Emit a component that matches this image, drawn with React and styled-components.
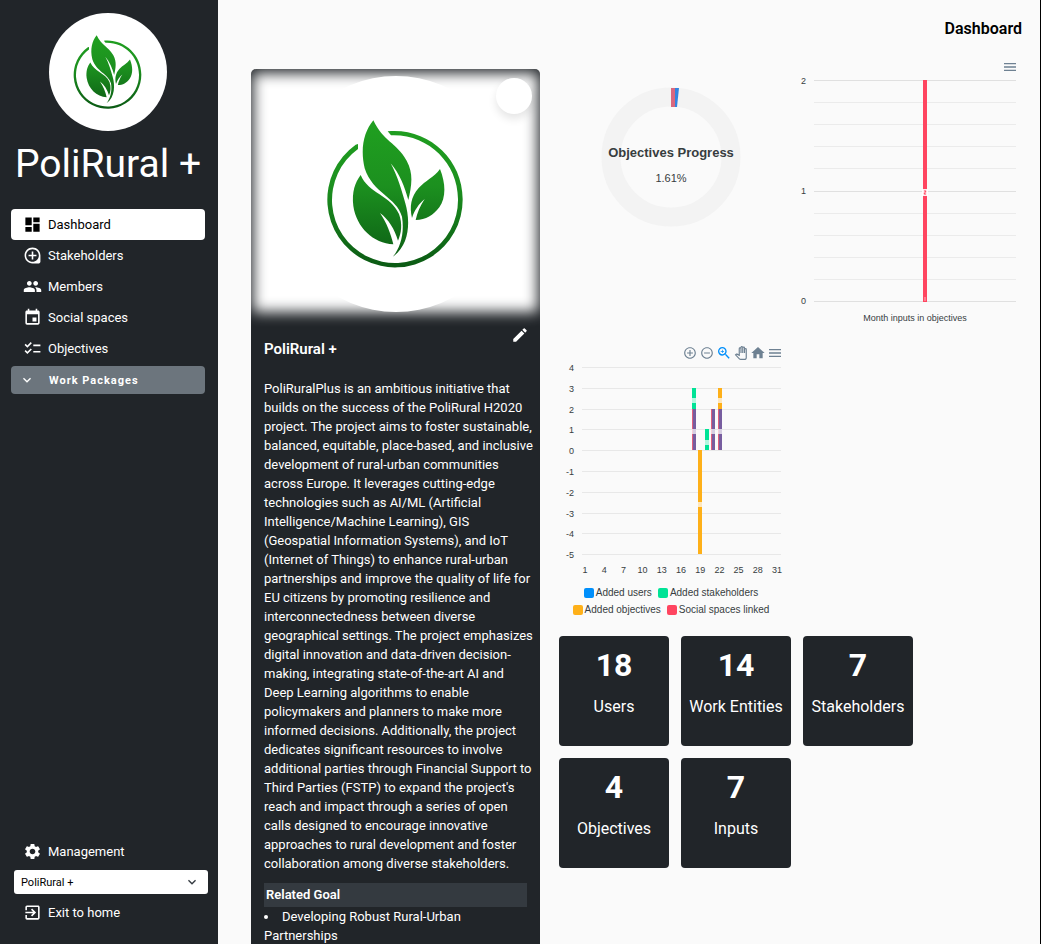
import React from "react";
import styled, { createGlobalStyle } from "styled-components";
import {
  MdDashboard, MdLoupe, MdPeople, MdEvent, MdChecklist, MdSettings, MdExitToApp, MdEdit,
  MdExpandMore, MdMenu, MdHome, MdZoomIn, MdAddCircleOutline, MdRemoveCircleOutline, MdOutlinePanTool,
} from "react-icons/md";

const ink = "#212529";
const chartFont = '"Liberation Sans", Arial, sans-serif';

const GlobalStyle = createGlobalStyle`
  *, *::before, *::after { box-sizing: border-box; }
  body { margin: 0; background: #fafafa; font-family: Roboto, sans-serif; color: #000; }
  h1, h2, h3, p, ul { margin: 0; padding: 0; }
  button { font-family: inherit; border: 0; padding: 0; background: none; cursor: pointer; }
`;

const Shell = styled.div`
  display: flex;
  height: 100vh;
  overflow: hidden;
`;

const Sidebar = styled.aside`
  display: flex;
  flex-direction: column;
  flex: 0 0 218px;
  padding: 13px 13px 16px 11px;
  background: ${ink};
  color: #fff;
`;

const Brand = styled.div`
  display: flex;
  flex-direction: column;
  align-items: center;
  margin-bottom: 21px;
`;

const BrandName = styled.h1`
  margin-top: 9px;
  font-size: 39px;
  line-height: 48px;
  font-weight: 400;
  white-space: nowrap;
`;

const Badge = styled.div`
  width: ${(p) => p.$size}px;
  height: ${(p) => p.$size}px;
  border-radius: 50%;
  background: #fff;
  svg { display: block; width: 100%; height: 100%; }
`;

const Nav = styled.nav`
  display: flex;
  flex-direction: column;
`;

const NavItem = styled.a`
  display: flex;
  align-items: center;
  gap: 6px;
  height: 31px;
  padding-left: 12px;
  border-radius: 4px;
  font-size: 13px;
  line-height: 20px;
  text-decoration: none;
  color: ${(p) => (p.$active ? "#000" : "#fff")};
  background: ${(p) => (p.$active ? "#fff" : "transparent")};
  svg { width: 19px; height: 19px; }
`;

const PackagesToggle = styled.button`
  display: flex;
  align-items: center;
  gap: 14px;
  height: 28px;
  margin-top: 2px;
  padding-left: 8px;
  border-radius: 4px;
  background: #6c757d;
  color: #fff;
  font-size: 11px;
  font-weight: 700;
  letter-spacing: 1px;
  svg { width: 16px; height: 16px; }
`;

const SidebarFooter = styled.div`
  display: flex;
  flex-direction: column;
  gap: 3px;
  margin-top: auto;
`;

const SelectWrap = styled.div`
  position: relative;
  margin: 0 -3px 0 3px;
  svg {
    position: absolute;
    right: 8px;
    top: 4px;
    width: 16px;
    height: 16px;
    color: #343a40;
    pointer-events: none;
  }
`;

const ProjectSelect = styled.select`
  display: block;
  width: 100%;
  height: 24px;
  padding: 0 24px 0 7px;
  appearance: none;
  border: 0;
  border-radius: 3px;
  background: #fff;
  color: #000;
  font-family: inherit;
  font-size: 11px;
`;

const Main = styled.main`
  flex: 1;
  min-width: 0;
  padding: 19px 18px 0 33px;
  overflow-y: auto;
  scrollbar-width: none;
  border-right: 1px solid #000;
`;

const PageTitle = styled.h2`
  text-align: right;
  font-size: 16px;
  line-height: 20px;
  font-weight: 600;
`;

const Content = styled.div`
  display: flex;
  align-items: flex-start;
  gap: 19px;
  margin-top: 30px;
`;

const ProjectCard = styled.article`
  position: relative;
  flex: 0 0 289px;
  padding-bottom: 40px;
  overflow: hidden;
  border-radius: 5px;
  background: ${ink};
  color: #fff;
`;

const Cover = styled.div`
  position: relative;
  display: flex;
  justify-content: center;
  height: 255px;
  padding-top: 7px;
  &::before {
    content: "";
    position: absolute;
    inset: 4px 2px 12px;
    background: #fff;
    filter: blur(7px);
  }
  ${Badge} { position: relative; }
`;

const CoverAction = styled.button`
  position: absolute;
  top: 9px;
  right: 8px;
  width: 36px;
  height: 36px;
  border-radius: 50%;
  background: #fff;
  box-shadow: 0 5px 8px rgba(0, 0, 0, 0.1);
`;

const CardBody = styled.div`
  padding: 0 13px;
  font-size: 13px;
  line-height: 19px;
`;

const CardHeading = styled.div`
  display: flex;
  justify-content: space-between;
  margin-bottom: 20px;
  h3 { padding-top: 15px; font-size: 15px; line-height: 20px; font-weight: 600; }
`;

const EditButton = styled.button`
  display: flex;
  align-items: flex-start;
  justify-content: flex-end;
  width: 24px;
  height: 24px;
  margin-right: -2px;
  padding-top: 2px;
  color: #fff;
  svg { width: 18px; height: 18px; }
`;

const Description = styled.p`
  margin-right: -6px;
`;

const GoalTitle = styled.h3`
  margin-top: 10px;
  padding: 2px;
  background: #343a40;
  font-size: 13px;
  line-height: 20px;
  font-weight: 600;
`;

const GoalList = styled.ul`
  list-style: disc inside;
`;

const Panel = styled.section`
  display: flex;
  flex-direction: column;
  flex: 1;
  min-width: 0;
`;

const ChartRow = styled.div`
  display: flex;
  justify-content: space-between;
  margin-top: -12px;
  height: 286px;
`;

const Figure = styled.figure`
  position: relative;
  width: ${(p) => p.$width}px;
  margin: 0;
  svg text { font-family: ${chartFont}; fill: #373d3f; }
`;

const Toolbar = styled.div`
  display: flex;
  align-items: center;
  justify-content: flex-end;
  gap: 1px;
  height: 20px;
  padding-right: ${(p) => p.$inset || 0}px;
`;

const Tool = styled.button`
  display: flex;
  align-items: center;
  justify-content: center;
  width: 16px;
  height: 16px;
  color: ${(p) => (p.$on ? "#008ffb" : "#6e8192")};
  svg { width: ${(p) => p.$size || 16}px; height: ${(p) => p.$size || 16}px; }
`;

const Plot = styled.svg`
  display: block;
`;

const Legend = styled.ul`
  display: flex;
  flex-wrap: wrap;
  justify-content: center;
  gap: 4px 6px;
  padding: 0 16px 0 8px;
  list-style: none;
  font-family: ${chartFont};
  font-size: 10px;
  line-height: 13px;
  color: #373d3f;
`;

const LegendItem = styled.li`
  display: flex;
  align-items: center;
  gap: 2px;
  &::before {
    content: "";
    width: 10px;
    height: 10px;
    border-radius: 2px;
    background: ${(p) => p.$color};
  }
`;

const Stats = styled.div`
  display: flex;
  flex-wrap: wrap;
  gap: 12px;
  margin-top: 20px;
`;

const Stat = styled.div`
  width: 110px;
  height: 110px;
  padding-top: 9px;
  border-radius: 4px;
  background: ${ink};
  color: #fff;
  text-align: center;
  white-space: nowrap;
`;

const StatValue = styled.div`
  font-size: 32px;
  line-height: 40px;
  font-weight: 700;
`;

const StatLabel = styled.div`
  margin-top: 12px;
  font-size: 16px;
  line-height: 20px;
`;

function LeafLogo({ id }) {
  return (
    <svg viewBox="114 48 708 708" role="img" aria-label="PoliRural logo">
      <defs>
        <linearGradient id={id} gradientUnits="userSpaceOnUse" x1="0" y1="180" x2="0" y2="620">
          <stop offset="0" stopColor="#20a020" />
          <stop offset="0.45" stopColor="#1c901f" />
          <stop offset="1" stopColor="#0b5a14" />
        </linearGradient>
      </defs>
      <g fill={`url(#${id})`}>
        <path d="M443 214C560 202 668 294 668 417A203 203 0 1 1 347 254L354 252L354 267A189 189 0 1 0 654 417C654 308 562 221 453 226Z" />
        <path d="M400 181C430 245 468 246 500 302C522 342 514 380 505 420C494 380 478 340 452 310C472 346 486 394 496 430C510 478 512 552 459 590C481 562 494 520 486 470C470 412 398 400 374 325C360 265 372 215 400 181Z" />
        <path d="M362 345C385 400 452 406 477 462C488 492 484 520 474 542C464 508 446 478 420 459C440 488 452 520 460 553C400 550 349 502 340 438C335 396 345 368 362 345Z" />
        <path d="M600 327C617 370 619 412 598 442C580 466 558 480 527 480C532 458 540 438 554 417C536 432 524 450 516 474C508 440 513 410 536 384C556 362 582 352 600 327Z" />
      </g>
    </svg>
  );
}

const navItems = [
  { label: "Dashboard", icon: MdDashboard, active: true },
  { label: "Stakeholders", icon: MdLoupe },
  { label: "Members", icon: MdPeople },
  { label: "Social spaces", icon: MdEvent },
  { label: "Objectives", icon: MdChecklist },
];

const stats = [
  [18, "Users"], [14, "Work Entities"], [7, "Stakeholders"], [4, "Objectives"], [7, "Inputs"],
];

const description =
  "PoliRuralPlus is an ambitious initiative that builds on the success of the PoliRural H2020 project. The project aims to foster sustainable, balanced, equitable, place-based, and inclusive development of rural-urban communities across Europe. It leverages cutting-edge technologies such as AI/ML (Artificial Intelligence/Machine Learning), GIS (Geospatial Information Systems), and IoT (Internet of Things) to enhance rural-urban partnerships and improve the quality of life for EU citizens by promoting resilience and interconnectedness between diverse geographical settings. The project emphasizes digital innovation and data-driven decision-making, integrating state-of-the-art AI and Deep Learning algorithms to enable policymakers and planners to make more informed decisions. Additionally, the project dedicates significant resources to involve additional parties through Financial Support to Third Parties (FSTP) to expand the project's reach and impact through a series of open calls designed to encourage innovative approaches to rural development and foster collaboration among diverse stakeholders.";

function ProgressChart() {
  return (
    <Figure $width={226}>
      <Plot width="226" height="240" viewBox="0 0 226 240">
        <circle cx="112" cy="100" r="60" fill="none" stroke="#f3f3f3" strokeWidth="19" />
        <path d="M112 31H120L118 50H112Z" fill="#3385e0" />
        <path d="M112 31H116V50H112Z" fill="#d9687f" />
        <text x="112" y="100" textAnchor="middle" fontSize="13" fontWeight="700">Objectives Progress</text>
        <text x="112" y="125" textAnchor="middle" fontSize="11">1.61%</text>
      </Plot>
    </Figure>
  );
}

function MonthChart() {
  const lines = Array.from({ length: 11 }, (_, i) => 14 + Math.round(i * 22.1));
  return (
    <Figure $width={228}>
      <Toolbar $inset={4}>
        <Tool aria-label="Menu"><MdMenu /></Tool>
      </Toolbar>
      <Plot width="228" height="250" viewBox="0 11 228 250">
        {lines.map((y, i) => (
          <path key={y} d={`M20 ${y + 0.5}H222`} stroke={i % 5 ? "#ebebeb" : "#e0e0e0"} />
        ))}
        <rect x="129" y="14" width="4" height="222" fill="#ff4560" />
        {[2, 1, 0].map((v, i) => (
          <text key={v} x="12" y={18 + i * 110} textAnchor="end" fontSize="9">{v}</text>
        ))}
        <rect x="128" y="123" width="6" height="7" fill="#fff" fillOpacity="0.9" />
        <path d="M130 125H132L130 128H132" fill="none" stroke="#ff4560" />
        <path d="M131 231V235" stroke="#fff" strokeOpacity="0.6" />
        <text x="121" y="255" textAnchor="middle" fontSize="9">Month inputs in objectives</text>
      </Plot>
    </Figure>
  );
}

function DailyChart() {
  const yOf = (v) => Math.round(7 + (4 - v) * 20.8);
  const ticks = [4, 3, 2, 1, 0, -1, -2, -3, -4, -5];
  const bars = [
    { x: 133, from: 2, to: 3, fill: "#00e396" },
    { x: 133, from: 0, to: 2, fill: "#775d9f", edge: true },
    { x: 146, from: 0, to: 1, fill: "#00e396" },
    { x: 152, from: 0, to: 2, fill: "#775d9f", edge: true },
    { x: 159, from: 2, to: 3, fill: "#feb019" },
    { x: 159, from: 0, to: 2, fill: "#775d9f", edge: true },
    { x: 139, from: -5, to: 0, fill: "#feb019" },
  ];
  const labels = [[135, 2.4], [135, 0.9], [148, 0.4], [154, 0.9], [161, 2.4], [161, 0.9], [141, -2.6]];
  return (
    <Figure $width={232}>
      <Toolbar $inset={8}>
        <Tool aria-label="Zoom in" $size={14}><MdAddCircleOutline /></Tool>
        <Tool aria-label="Zoom out" $size={14}><MdRemoveCircleOutline /></Tool>
        <Tool aria-label="Selection zoom" $on><MdZoomIn stroke="currentColor" /></Tool>
        <Tool aria-label="Pan" $size={14}><MdOutlinePanTool /></Tool>
        <Tool aria-label="Reset"><MdHome /></Tool>
        <Tool aria-label="Menu"><MdMenu /></Tool>
      </Toolbar>
      <Plot width="232" height="223" viewBox="0 3 232 223">
        {ticks.map((v) => (
          <g key={v}>
            <path d={`M23 ${yOf(v) + 0.5}H222`} stroke="#e8e8e8" />
            <text x="15" y={yOf(v) + 4} textAnchor="end" fontSize="9">{v}</text>
          </g>
        ))}
        {bars.map((b) => (
          <g key={`${b.x}${b.from}`}>
            <rect x={b.x} y={yOf(b.to)} width="4" height={yOf(b.from) - yOf(b.to)} fill={b.fill} />
            {b.edge && <rect x={b.x} y={yOf(b.to)} width="1" height={yOf(b.from) - yOf(b.to)} fill="#e0607c" />}
          </g>
        ))}
        {labels.map(([x, v]) => (
          <rect key={`${x}${v}`} x={x - 2} y={yOf(v) - 2} width="4" height="5" fill="#fff" fillOpacity="0.7" />
        ))}
        {[1, 4, 7, 10, 13, 16, 19, 22, 25, 28, 31].map((d, i) => (
          <text key={d} x={26 + i * 19.2} y="213" textAnchor="middle" fontSize="9">{d}</text>
        ))}
      </Plot>
      <Legend>
        <LegendItem $color="#008ffb">Added users</LegendItem>
        <LegendItem $color="#00e396">Added stakeholders</LegendItem>
        <LegendItem $color="#feb019">Added objectives</LegendItem>
        <LegendItem $color="#ff4560">Social spaces linked</LegendItem>
      </Legend>
    </Figure>
  );
}

export default function App() {
  return (
    <Shell>
      <GlobalStyle />
      <Sidebar>
        <Brand>
          <Badge $size={118}><LeafLogo id="leafSmall" /></Badge>
          <BrandName>PoliRural +</BrandName>
        </Brand>
        <Nav>
          {navItems.map(({ label, icon: Icon, active }) => (
            <NavItem key={label} href="#" $active={active}><Icon />{label}</NavItem>
          ))}
          <PackagesToggle><MdExpandMore />Work Packages</PackagesToggle>
        </Nav>
        <SidebarFooter>
          <NavItem href="#"><MdSettings />Management</NavItem>
          <SelectWrap>
            <ProjectSelect aria-label="Project" defaultValue="PoliRural +">
              <option>PoliRural +</option>
            </ProjectSelect>
            <MdExpandMore />
          </SelectWrap>
          <NavItem href="#"><MdExitToApp />Exit to home</NavItem>
        </SidebarFooter>
      </Sidebar>
      <Main>
        <PageTitle>Dashboard</PageTitle>
        <Content>
          <ProjectCard>
            <Cover>
              <Badge $size={236}><LeafLogo id="leafLarge" /></Badge>
              <CoverAction aria-label="Change cover" />
            </Cover>
            <CardBody>
              <CardHeading>
                <h3>PoliRural +</h3>
                <EditButton aria-label="Edit project"><MdEdit /></EditButton>
              </CardHeading>
              <Description>{description}</Description>
              <GoalTitle>Related Goal</GoalTitle>
              <GoalList>
                <li>Developing Robust Rural-Urban Partnerships</li>
              </GoalList>
            </CardBody>
          </ProjectCard>
          <Panel>
            <ChartRow>
              <ProgressChart />
              <MonthChart />
            </ChartRow>
            <DailyChart />
            <Stats>
              {stats.map(([value, label]) => (
                <Stat key={label}>
                  <StatValue>{value}</StatValue>
                  <StatLabel>{label}</StatLabel>
                </Stat>
              ))}
            </Stats>
          </Panel>
        </Content>
      </Main>
    </Shell>
  );
}
